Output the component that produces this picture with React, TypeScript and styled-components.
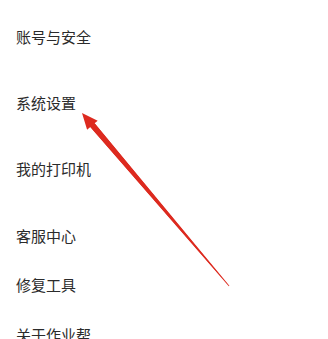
import styled, { createGlobalStyle } from "styled-components";

const GlobalStyle = createGlobalStyle`
  html, body {
    margin: 0;
    padding: 0;
    background: #ffffff;
  }
  body {
    font-family: "Noto Sans CJK SC", "Noto Sans", sans-serif;
  }
`;

type Item = {
  label: string;
  height: number;
};

const items: Item[] = [
  { label: "账号与安全", height: 66 },
  { label: "系统设置", height: 66 },
  { label: "我的打印机", height: 66 },
  { label: "客服中心", height: 68 },
  { label: "修复工具", height: 30 },
  { label: "关于作业帮", height: 70 },
];

const Arrow = () => (
  <ArrowSvg width="328" height="339" viewBox="0 0 328 339">
    <polygon
      points="82,113 87.1,129.7 90.3,127 229,286 94.6,123.3 97.7,120.7"
      fill="#dd2a1f"
    />
    <polygon points="90.3,127 94.6,123.3 229.4,285.7 228.8,286.3" fill="#dd2a1f" />
  </ArrowSvg>
);

export default function App() {
  return (
    <>
      <GlobalStyle />
      <Page>
        <List>
          {items.map((item) => (
            <Row key={item.label} $height={item.height}>
              <Label>{item.label}</Label>
            </Row>
          ))}
        </List>
        <Arrow />
      </Page>
    </>
  );
}

const Page = styled.div`
  position: relative;
  width: 328px;
  height: 339px;
  overflow: hidden;
  background: #ffffff;
`;

const List = styled.div`
  display: flex;
  flex-direction: column;
  padding: 4px 16px 0;
`;

const Row = styled.div<{ $height: number }>`
  display: flex;
  align-items: center;
  height: ${({ $height }) => $height}px;
  flex-shrink: 0;
`;

const Label = styled.span`
  font-size: 15px;
  line-height: 20px;
  color: #2b2b2b;
`;

const ArrowSvg = styled.svg`
  position: absolute;
  left: 0;
  top: 0;
  pointer-events: none;
`;
